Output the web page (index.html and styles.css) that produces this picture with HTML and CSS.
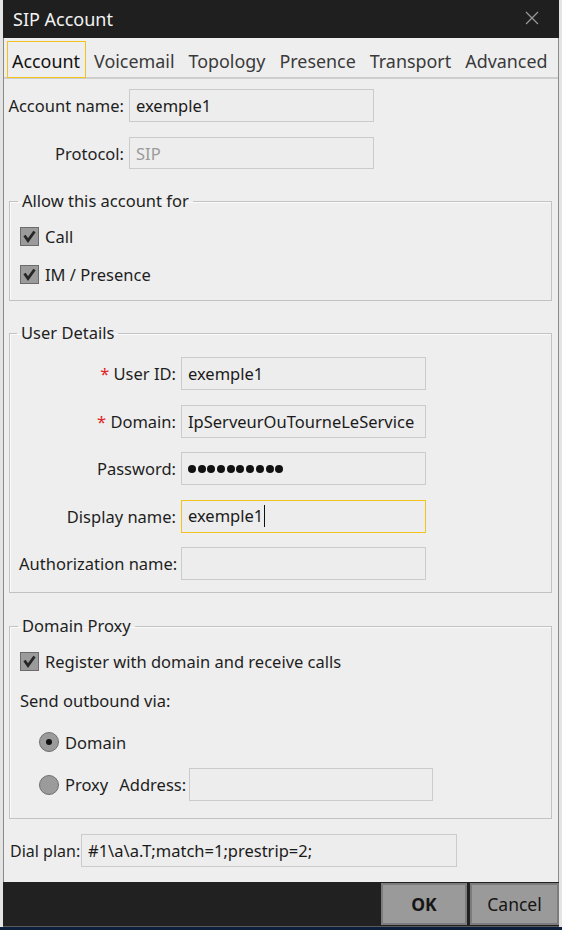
FILE: index.html
```html
<!DOCTYPE html>
<html>
<head>
<meta charset="utf-8">
<link rel="stylesheet" href="styles.css">
</head>
<body>
<div class="desk">
  <div class="window">
    <div class="titlebar">
      <span class="title">SIP Account</span>
      <svg class="close" width="14" height="14" viewBox="0 0 14 14"><path d="M1 1 L13 13 M13 1 L1 13" stroke="#9a9a9a" stroke-width="1.2" fill="none"/></svg>
    </div>
    <div class="tabs">
      <span class="tab active">Account</span>
      <span class="tab">Voicemail</span>
      <span class="tab">Topology</span>
      <span class="tab">Presence</span>
      <span class="tab">Transport</span>
      <span class="tab">Advanced</span>
    </div>
    <div class="content">
      <div class="row">
        <span class="lbl lbl-top">Account name:</span>
        <div class="field f-top">exemple1</div>
      </div>
      <div class="row r2">
        <span class="lbl lbl-top">Protocol:</span>
        <div class="field f-top disabled">SIP</div>
      </div>

      <fieldset class="group g1">
        <legend>Allow this account for</legend>
        <div class="check">
          <svg class="cb" width="19" height="19" viewBox="0 0 19 19"><rect x="0.5" y="0.5" width="18" height="18" fill="#9b9b9b" stroke="#6b6b6b"/><path d="M4.5 8.5 L8 13.5 L14.5 4.5" stroke="#262626" stroke-width="2.8" fill="none"/></svg>
          <span>Call</span>
        </div>
        <div class="check c2">
          <svg class="cb" width="19" height="19" viewBox="0 0 19 19"><rect x="0.5" y="0.5" width="18" height="18" fill="#9b9b9b" stroke="#6b6b6b"/><path d="M4.5 8.5 L8 13.5 L14.5 4.5" stroke="#262626" stroke-width="2.8" fill="none"/></svg>
          <span>IM / Presence</span>
        </div>
      </fieldset>

      <fieldset class="group g2">
        <legend>User Details</legend>
        <div class="rows">
          <div class="row"><span class="lbl lbl-ud"><span class="req">*</span> User ID:</span><div class="field f-ud">exemple1</div></div>
          <div class="row"><span class="lbl lbl-ud"><span class="req">*</span> Domain:</span><div class="field f-ud">IpServeurOuTourneLeService</div></div>
          <div class="row"><span class="lbl lbl-ud">Password:</span><div class="field f-ud"><span class="dots"><i></i><i></i><i></i><i></i><i></i><i></i><i></i><i></i><i></i><i></i></span></div></div>
          <div class="row"><span class="lbl lbl-ud">Display name:</span><div class="field f-ud focus"><span class="caret">exemple1</span></div></div>
          <div class="row"><span class="lbl lbl-ud">Authorization name:</span><div class="field f-ud"></div></div>
        </div>
      </fieldset>

      <fieldset class="group g3">
        <legend>Domain Proxy</legend>
        <div class="check c3">
          <svg class="cb" width="19" height="19" viewBox="0 0 19 19"><rect x="0.5" y="0.5" width="18" height="18" fill="#9b9b9b" stroke="#6b6b6b"/><path d="M4.5 8.5 L8 13.5 L14.5 4.5" stroke="#262626" stroke-width="2.8" fill="none"/></svg>
          <span>Register with domain and receive calls</span>
        </div>
        <div class="plain">Send outbound via:</div>
        <div class="radio-row r-dom">
          <span class="radio on"></span><span>Domain</span>
        </div>
        <div class="radio-row r-prx">
          <span class="radio"></span><span>Proxy</span><span class="addr">Address:</span><div class="field f-prx"></div>
        </div>
      </fieldset>

      <div class="row dial">
        <span class="lbl-dial">Dial plan:</span>
        <div class="field f-dial">#1\a\a.T;match=1;prestrip=2;</div>
      </div>
    </div>
    <div class="footer">
      <button class="btn ok">OK</button>
      <button class="btn cancel">Cancel</button>
    </div>
  </div>
</div>
</body>
</html>
```

FILE: styles.css
```css
html, body {
  margin: 0;
  padding: 0;
}
body {
  width: 562px;
  height: 930px;
  overflow: hidden;
  background: #0c1f3d;
  font-family: "Noto Sans", "Open Sans", sans-serif;
  color: #1e1e1e;
}
.desk {
  height: 927px;
  padding-left: 3px;
  background: #e4e4e4;
  display: flex;
}
.window {
  width: 556px;
  height: 927px;
  box-sizing: border-box;
  border-left: 1px solid #8a8a8a;
  border-right: 1px solid #8a8a8a;
  background: #eeeeee;
  display: flex;
  flex-direction: column;
}
.titlebar {
  height: 38px;
  flex: none;
  background: #1f1f1f;
  display: flex;
  align-items: center;
  justify-content: space-between;
  padding: 0 20px 0 10px;
  margin: 0 -1px;
}
.title {
  color: #f2f2f2;
  font-size: 18px;
  padding-bottom: 1px;
}
.close { display: block; margin-top: -2px; }

.tabs {
  height: 41px;
  flex: none;
  box-sizing: border-box;
  display: flex;
  align-items: flex-end;
  padding: 3px 0 0 3px;
  border-bottom: 2px solid #cdcdcd;
}
.tab {
  height: 37px;
  box-sizing: border-box;
  display: flex;
  align-items: center;
  padding: 2px 5px 0 4px;
  margin-right: 3px;
  font-size: 17.9px;
  color: #3a3a3a;
  border: 1px solid transparent;
  margin-bottom: -1px;
}
.tab.active {
  color: #111;
  border-color: #f3c31d;
}

.content {
  flex: 1;
  padding: 10px 0 0 0;
}
.row {
  display: flex;
  align-items: center;
  font-size: 16.5px;
}
.r2 { margin-top: 15px; }
.lbl {
  text-align: right;
  white-space: nowrap;
  box-sizing: border-box;
  padding-right: 5px;
}
.lbl-top { width: 125px; }
.field {
  box-sizing: border-box;
  height: 33px;
  border: 1px solid #cbcbcb;
  background: #ededed;
  display: flex;
  align-items: center;
  padding: 0 6px;
  font-size: 16.5px;
  color: #1a1a1a;
  white-space: nowrap;
  overflow: hidden;
}
.f-top { width: 245px; }
.field.disabled { color: #9a9a9a; height: 32px; }

.group {
  margin: 0 6px 0 5px;
  border: 1px solid #c2c2c2;
  box-shadow: inset 1px 1px 0 #fafafa;
  padding: 0 8px 0 10px;
  min-width: 0;
}
.group legend {
  font-size: 16.5px;
  line-height: 22px;
  padding: 0 4px;
  margin-left: -2px;
  color: #222;
}
.g1 { margin-top: 21px; padding-bottom: 14px; }
.g2 { margin-top: 21px; padding-bottom: 12px; padding-left: 9px; }
.g3 { margin-top: 22px; padding-bottom: 17px; }

.check {
  display: flex;
  align-items: center;
  height: 24px;
  font-size: 16.5px;
  gap: 6px;
  margin-top: 12px;
}
.check.c2 { margin-top: 14px; }
.check.c3 { margin-top: 12px; }
.cb { display: block; flex: none; }

.rows {
  display: flex;
  flex-direction: column;
  gap: 14.5px;
  margin-top: 13px;
}
.lbl-ud { width: 162px; }
.f-ud { width: 245px; }
.req { color: #e02424; }
.field.focus { border-color: #f3c31d; }
.caret {
  border-right: 1.5px solid #111;
  padding-right: 1px;
  line-height: 22px;
}
.dots { display: flex; gap: 1.7px; padding-left: 0; }
.dots i {
  display: block;
  width: 8px;
  height: 8px;
  border-radius: 50%;
  background: #111;
}

.plain {
  font-size: 16.5px;
  height: 24px;
  line-height: 24px;
  margin-top: 16px;
}
.radio-row {
  display: flex;
  align-items: center;
  font-size: 16.5px;
  padding-left: 19px;
  gap: 6px;
}
.r-dom { height: 24px; margin-top: 17px; }
.r-prx { height: 33px; margin-top: 14px; }
.radio {
  width: 20px;
  height: 20px;
  box-sizing: border-box;
  border-radius: 50%;
  background: #9b9b9b;
  border: 1px solid #707070;
  display: flex;
  align-items: center;
  justify-content: center;
  flex: none;
}
.radio.on::after {
  content: "";
  width: 6px;
  height: 6px;
  border-radius: 50%;
  background: #111;
}
.addr { margin-left: 5px; }
.f-prx { width: 244px; margin-left: -3px; }

.dial { margin-top: 15px; padding-left: 6px; }
.lbl-dial { width: 71px; white-space: nowrap; font-size: 16px; }
.f-dial { width: 376px; }

.footer {
  height: 45px;
  flex: none;
  box-sizing: border-box;
  background: #212121;
  display: flex;
  justify-content: flex-end;
  align-items: flex-end;
  padding: 2px 0 1px 0;
  gap: 3px;
  border-bottom: 1px solid #5a5a5a;
  margin: 0 -1px;
}
.btn {
  height: 42px;
  box-sizing: border-box;
  border: 2px solid #7c7c7c;
  background: #9a9a9a;
  font-family: "Noto Sans", "Open Sans", sans-serif;
  font-size: 17.5px;
  color: #151515;
  padding: 0;
}
.ok { width: 86px; font-weight: bold; }
.cancel { width: 89px; }
```
